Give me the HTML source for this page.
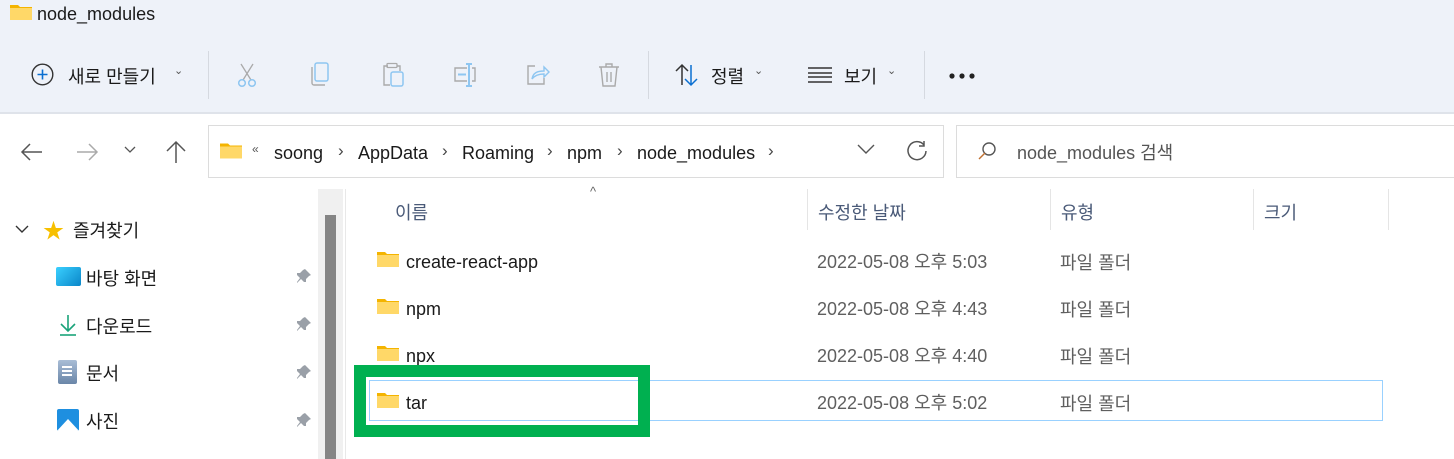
<!DOCTYPE html>
<html><head><meta charset="utf-8"><style>
*{margin:0;padding:0;box-sizing:border-box}
body{width:1454px;height:459px;overflow:hidden;background:#fff;font-family:"Liberation Sans","Noto Sans CJK KR",sans-serif;color:#1a1a1a;position:relative}
.a{position:absolute}
.t{font-size:18px;line-height:20px;white-space:nowrap}
.k{margin-top:3px}
.fold{position:absolute;width:22px;height:16px}
.g{color:#5f5f5f}
.h{color:#4a5a78;font-size:18px;line-height:20px;margin-top:3px}
</style></head><body>
<div class="a" style="left:0;top:0;width:1454px;height:113px;background:#eef2f9"></div>
<div class="a" style="left:0;top:112px;width:1454px;height:2px;background:#dfe3ea"></div>
<svg class="fold" style="left:10px;top:4px" viewBox="0 0 22 16"><path d="M0 1h8l2 2h12v13H0z" fill="#f4b400"/><rect x="0" y="4" width="22" height="12" fill="#ffd868"/></svg>
<div class="a t" style="left:37px;top:4px">node_modules</div>
<svg class="a" style="left:31px;top:63px" width="23" height="23" viewBox="0 0 23 23"><circle cx="11.5" cy="11.5" r="10.3" fill="none" stroke="#333" stroke-width="1.4"/><path d="M11.5 6.5v10M6.5 11.5h10" stroke="#0a6fd1" stroke-width="1.6"/></svg>
<div class="a t k" style="left:68px;top:64px">새로 만들기</div>
<div class="a" style="left:174px;top:64px;font-size:11px;color:#555">&#8964;</div>
<div class="a" style="left:208px;top:51px;width:1px;height:48px;background:#d5d9e0"></div>
<svg class="a" style="left:236px;top:62px" width="26" height="26" viewBox="0 0 26 26" fill="none"><path d="M5 2l10 16M17 2L7 18" stroke="#aaa" stroke-width="1.3"/><circle cx="6" cy="21" r="3.3" stroke="#8ec6f1" stroke-width="1.5"/><circle cx="16" cy="21" r="3.3" stroke="#8ec6f1" stroke-width="1.5"/></svg>
<svg class="a" style="left:310px;top:62px" width="22" height="26" viewBox="0 0 22 26" fill="none"><rect x="5" y="1" width="13" height="18" rx="2" stroke="#8ec6f1" stroke-width="1.5"/><path d="M2 5v16a2 2 0 0 0 2 2h11" stroke="#aaa" stroke-width="1.4"/></svg>
<svg class="a" style="left:381px;top:62px" width="24" height="26" viewBox="0 0 24 26" fill="none"><path d="M7 4H3v19h6" stroke="#aaa" stroke-width="1.4"/><rect x="6" y="1.5" width="10" height="4" rx="1" stroke="#aaa" stroke-width="1.3"/><path d="M16 4h3v5" stroke="#aaa" stroke-width="1.4"/><rect x="10" y="10" width="12" height="14" rx="2" stroke="#8ec6f1" stroke-width="1.5"/></svg>
<svg class="a" style="left:452px;top:62px" width="26" height="26" viewBox="0 0 26 26" fill="none"><path d="M15 6H3v13h12M20 6h3v13h-3" stroke="#aaa" stroke-width="1.4"/><path d="M17 2v22M14 2h6M14 24h6M6 12.5h8" stroke="#8ec6f1" stroke-width="2"/></svg>
<svg class="a" style="left:525px;top:62px" width="26" height="26" viewBox="0 0 26 26" fill="none"><path d="M10 4H3v18h16v-6" stroke="#aaa" stroke-width="1.4"/><path d="M7 17c1-6 5-8 12-8V5l5 5-5 5v-3c-5 0-9 1-12 5z" stroke="#8ec6f1" stroke-width="1.4"/></svg>
<svg class="a" style="left:597px;top:62px" width="24" height="26" viewBox="0 0 24 26" fill="none"><path d="M2 5h20M9 5V2h6v3M4 5l2 19h12l2-19M10 10v10M14 10v10" stroke="#aaa" stroke-width="1.4"/></svg>
<div class="a" style="left:648px;top:51px;width:1px;height:48px;background:#d5d9e0"></div>
<svg class="a" style="left:674px;top:63px" width="26" height="24" viewBox="0 0 26 24" fill="none"><path d="M8 22V2M2 8l6-6 6 6" stroke="#333" stroke-width="1.5"/><path d="M17 2v20M11 16l6 6 6-6" stroke="#0a6fd1" stroke-width="1.5"/></svg>
<div class="a t k" style="left:711px;top:64px">정렬</div>
<div class="a" style="left:754px;top:64px;font-size:11px;color:#555">&#8964;</div>
<svg class="a" style="left:807px;top:66px" width="26" height="18" viewBox="0 0 26 18"><path d="M1 2h24M1 7h24M1 11h24M1 16h24" stroke="#333" stroke-width="1.4"/></svg>
<div class="a t k" style="left:844px;top:64px">보기</div>
<div class="a" style="left:887px;top:64px;font-size:11px;color:#555">&#8964;</div>
<div class="a" style="left:924px;top:51px;width:1px;height:48px;background:#d5d9e0"></div>
<svg class="a" style="left:949px;top:73px" width="26" height="6"><circle cx="3" cy="3" r="2.6" fill="#222"/><circle cx="13" cy="3" r="2.6" fill="#222"/><circle cx="23" cy="3" r="2.6" fill="#222"/></svg>
<svg class="a" style="left:20px;top:142px" width="24" height="20" viewBox="0 0 24 20" fill="none"><path d="M22 10H3M10 2L2 10l8 8" stroke="#555" stroke-width="1.5"/></svg>
<svg class="a" style="left:75px;top:142px" width="24" height="20" viewBox="0 0 24 20" fill="none"><path d="M2 10h19M14 2l8 8-8 8" stroke="#aaa" stroke-width="1.5"/></svg>
<svg class="a" style="left:124px;top:146px" width="12" height="8" viewBox="0 0 12 8" fill="none"><path d="M1 1l5 5 5-5" stroke="#555" stroke-width="1.3"/></svg>
<svg class="a" style="left:165px;top:140px" width="22" height="24" viewBox="0 0 22 24" fill="none"><path d="M11 23V2M2 11l9-9 9 9" stroke="#555" stroke-width="1.5"/></svg>
<div class="a" style="left:208px;top:125px;width:736px;height:53px;border:1px solid #dcdcdc"></div>
<svg class="fold" style="left:220px;top:142px;width:22px;height:17px" viewBox="0 0 22 16"><path d="M0 1h8l2 2h12v13H0z" fill="#f4b400"/><rect x="0" y="4" width="22" height="12" fill="#ffd868"/></svg>
<div class="a" style="left:252px;top:142px;font-size:12px;color:#555">«</div>
<div class="a t" style="left:274px;top:143px">soong</div>
<div class="a" style="left:338px;top:141px;font-size:17px;color:#444">›</div>
<div class="a t" style="left:358px;top:143px">AppData</div>
<div class="a" style="left:442px;top:141px;font-size:17px;color:#444">›</div>
<div class="a t" style="left:462px;top:143px">Roaming</div>
<div class="a" style="left:547px;top:141px;font-size:17px;color:#444">›</div>
<div class="a t" style="left:567px;top:143px">npm</div>
<div class="a" style="left:617px;top:141px;font-size:17px;color:#444">›</div>
<div class="a t" style="left:637px;top:143px">node_modules</div>
<div class="a" style="left:768px;top:141px;font-size:17px;color:#444">›</div>
<svg class="a" style="left:857px;top:144px" width="18" height="11" viewBox="0 0 18 11" fill="none"><path d="M1 1l8 8 8-8" stroke="#555" stroke-width="1.4"/></svg>
<svg class="a" style="left:906px;top:140px" width="22" height="22" viewBox="0 0 22 22" fill="none"><path d="M18 5A9 9 0 1 0 20 11" stroke="#555" stroke-width="1.5"/><path d="M18 1v5h-5" stroke="#555" stroke-width="1.5"/></svg>
<div class="a" style="left:956px;top:125px;width:500px;height:53px;border:1px solid #dcdcdc"></div>
<svg class="a" style="left:977px;top:141px" width="20" height="20" viewBox="0 0 20 20" fill="none"><circle cx="12" cy="8" r="6" stroke="#555" stroke-width="1.4"/><path d="M8 12l-6 6" stroke="#c07030" stroke-width="1.4"/></svg>
<div class="a t" style="left:1017px;top:143px;color:#555">node_modules 검색</div>
<svg class="a" style="left:15px;top:225px" width="14" height="9" viewBox="0 0 14 9" fill="none"><path d="M1 1l6 6 6-6" stroke="#333" stroke-width="1.4"/></svg>
<div class="a" style="left:43px;top:215px;font-size:21px;color:#f7c000">★</div>
<div class="a t k" style="left:73px;top:218px">즐겨찾기</div>
<div class="a" style="left:56px;top:267px;width:25px;height:19px;background:linear-gradient(135deg,#3ad0ff,#0a86c8);border-radius:2px"></div>
<div class="a t k" style="left:86px;top:266px">바탕 화면</div>
<svg class="a" style="left:58px;top:313px" width="20" height="24" viewBox="0 0 20 24" fill="none"><path d="M10 2v16M3 11l7 7 7-7" stroke="#1aa37a" stroke-width="1.6"/><path d="M2 22h16" stroke="#1aa37a" stroke-width="1.6"/></svg>
<div class="a t k" style="left:86px;top:314px">다운로드</div>
<div class="a" style="left:58px;top:360px;width:19px;height:24px;background:linear-gradient(#a9bdd6,#6a86a8);border-radius:2px"></div>
<div class="a" style="left:62px;top:366px;width:10px;height:2px;background:#fff;box-shadow:0 4px #fff,0 8px #fff"></div>
<div class="a t k" style="left:86px;top:361px">문서</div>
<div class="a" style="left:57px;top:409px;width:22px;height:22px;background:#1e8fe0;border-radius:2px;overflow:hidden"><div style="position:absolute;left:-2px;top:10px;width:0;height:0;border-left:13px solid transparent;border-right:13px solid transparent;border-bottom:14px solid #fff"></div></div>
<div class="a t k" style="left:86px;top:409px">사진</div>
<svg class="a" style="left:296px;top:268px" width="16" height="16" viewBox="0 0 16 16"><path d="M9 1l6 6-2 1-3 3 0 3-2 0-3-3-4 4 0-1 3-4-3-3 0-2 3 0 3-3z" fill="#9aa0a8"/></svg>
<svg class="a" style="left:296px;top:316px" width="16" height="16" viewBox="0 0 16 16"><path d="M9 1l6 6-2 1-3 3 0 3-2 0-3-3-4 4 0-1 3-4-3-3 0-2 3 0 3-3z" fill="#9aa0a8"/></svg>
<svg class="a" style="left:296px;top:364px" width="16" height="16" viewBox="0 0 16 16"><path d="M9 1l6 6-2 1-3 3 0 3-2 0-3-3-4 4 0-1 3-4-3-3 0-2 3 0 3-3z" fill="#9aa0a8"/></svg>
<svg class="a" style="left:296px;top:412px" width="16" height="16" viewBox="0 0 16 16"><path d="M9 1l6 6-2 1-3 3 0 3-2 0-3-3-4 4 0-1 3-4-3-3 0-2 3 0 3-3z" fill="#9aa0a8"/></svg>
<div class="a" style="left:318px;top:189px;width:25px;height:270px;background:#f0f0f0"></div>
<div class="a" style="left:325px;top:215px;width:11px;height:244px;background:#858585"></div>
<div class="a" style="left:345px;top:189px;width:1px;height:270px;background:#e8e8e8"></div>
<div class="a" style="left:590px;top:184px;font-size:13px;color:#666">^</div>
<div class="a h" style="left:395px;top:200px">이름</div>
<div class="a" style="left:807px;top:189px;width:1px;height:41px;background:#e5e5e5"></div>
<div class="a h" style="left:818px;top:200px">수정한 날짜</div>
<div class="a" style="left:1050px;top:189px;width:1px;height:41px;background:#e5e5e5"></div>
<div class="a h" style="left:1061px;top:200px">유형</div>
<div class="a" style="left:1253px;top:189px;width:1px;height:41px;background:#e5e5e5"></div>
<div class="a h" style="left:1264px;top:200px">크기</div>
<div class="a" style="left:1388px;top:189px;width:1px;height:41px;background:#e5e5e5"></div>
<div class="a" style="left:369px;top:380px;width:1014px;height:41px;border:1px solid #99d1ff"></div>
<svg class="fold" style="left:377px;top:251px" viewBox="0 0 22 16"><path d="M0 1h8l2 2h12v13H0z" fill="#f4b400"/><rect x="0" y="4" width="22" height="12" fill="#ffd868"/></svg>
<div class="a t" style="left:406px;top:252px">create-react-app</div>
<div class="a t g" style="left:817px;top:252px">2022-05-08 오후 5:03</div>
<div class="a t g k" style="left:1060px;top:250px">파일 폴더</div>
<svg class="fold" style="left:377px;top:298px" viewBox="0 0 22 16"><path d="M0 1h8l2 2h12v13H0z" fill="#f4b400"/><rect x="0" y="4" width="22" height="12" fill="#ffd868"/></svg>
<div class="a t" style="left:406px;top:299px">npm</div>
<div class="a t g" style="left:817px;top:299px">2022-05-08 오후 4:43</div>
<div class="a t g k" style="left:1060px;top:297px">파일 폴더</div>
<svg class="fold" style="left:377px;top:345px" viewBox="0 0 22 16"><path d="M0 1h8l2 2h12v13H0z" fill="#f4b400"/><rect x="0" y="4" width="22" height="12" fill="#ffd868"/></svg>
<div class="a t" style="left:406px;top:346px">npx</div>
<div class="a t g" style="left:817px;top:346px">2022-05-08 오후 4:40</div>
<div class="a t g k" style="left:1060px;top:344px">파일 폴더</div>
<svg class="fold" style="left:377px;top:392px" viewBox="0 0 22 16"><path d="M0 1h8l2 2h12v13H0z" fill="#f4b400"/><rect x="0" y="4" width="22" height="12" fill="#ffd868"/></svg>
<div class="a t" style="left:406px;top:393px">tar</div>
<div class="a t g" style="left:817px;top:393px">2022-05-08 오후 5:02</div>
<div class="a t g k" style="left:1060px;top:391px">파일 폴더</div>
<div class="a" style="left:354px;top:365px;width:296px;height:72px;border:12px solid #00b050"></div>
</body></html>
